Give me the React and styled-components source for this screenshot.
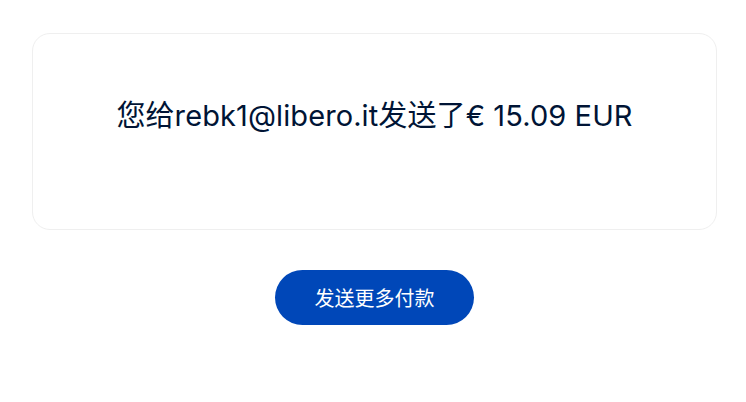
import * as React from "react"
import styled, { createGlobalStyle } from "styled-components"

const GlobalStyle = createGlobalStyle`
  html, body {
    margin: 0;
    padding: 0;
    background: #ffffff;
  }
  body {
    font-family: "Inter", "Noto Sans CJK SC", sans-serif;
    color: #001435;
  }
`

const Page = styled.div`
  display: flex;
  flex-direction: column;
  align-items: center;
  padding: 33px 29px 0 32px;
`

const Card = styled.div`
  box-sizing: border-box;
  width: 100%;
  height: 197px;
  border: 1px solid #efefef;
  border-radius: 18px;
  background: #fff;
  display: flex;
  align-items: center;
  justify-content: center;
  padding-bottom: 38px;
`

const Message = styled.h1`
  margin: 0;
  font-size: 29px;
  font-weight: 400;
  letter-spacing: 0.1px;
  color: #001435;
  font-family: "Inter", "Noto Sans CJK SC", sans-serif;
`

const SendButton = styled.button`
  margin-top: 40px;
  width: 199px;
  height: 55px;
  border: 0;
  border-radius: 28px;
  background: #0047b8;
  color: #fff;
  font-size: 20px;
  font-family: "Noto Sans CJK SC", sans-serif;
  cursor: pointer;
`

export default function App() {
  return (
    <>
      <GlobalStyle />
      <Page>
        <Card>
          <Message>您给rebk1@libero.it发送了€ 15.09 EUR</Message>
        </Card>
        <SendButton>发送更多付款</SendButton>
      </Page>
    </>
  )
}
